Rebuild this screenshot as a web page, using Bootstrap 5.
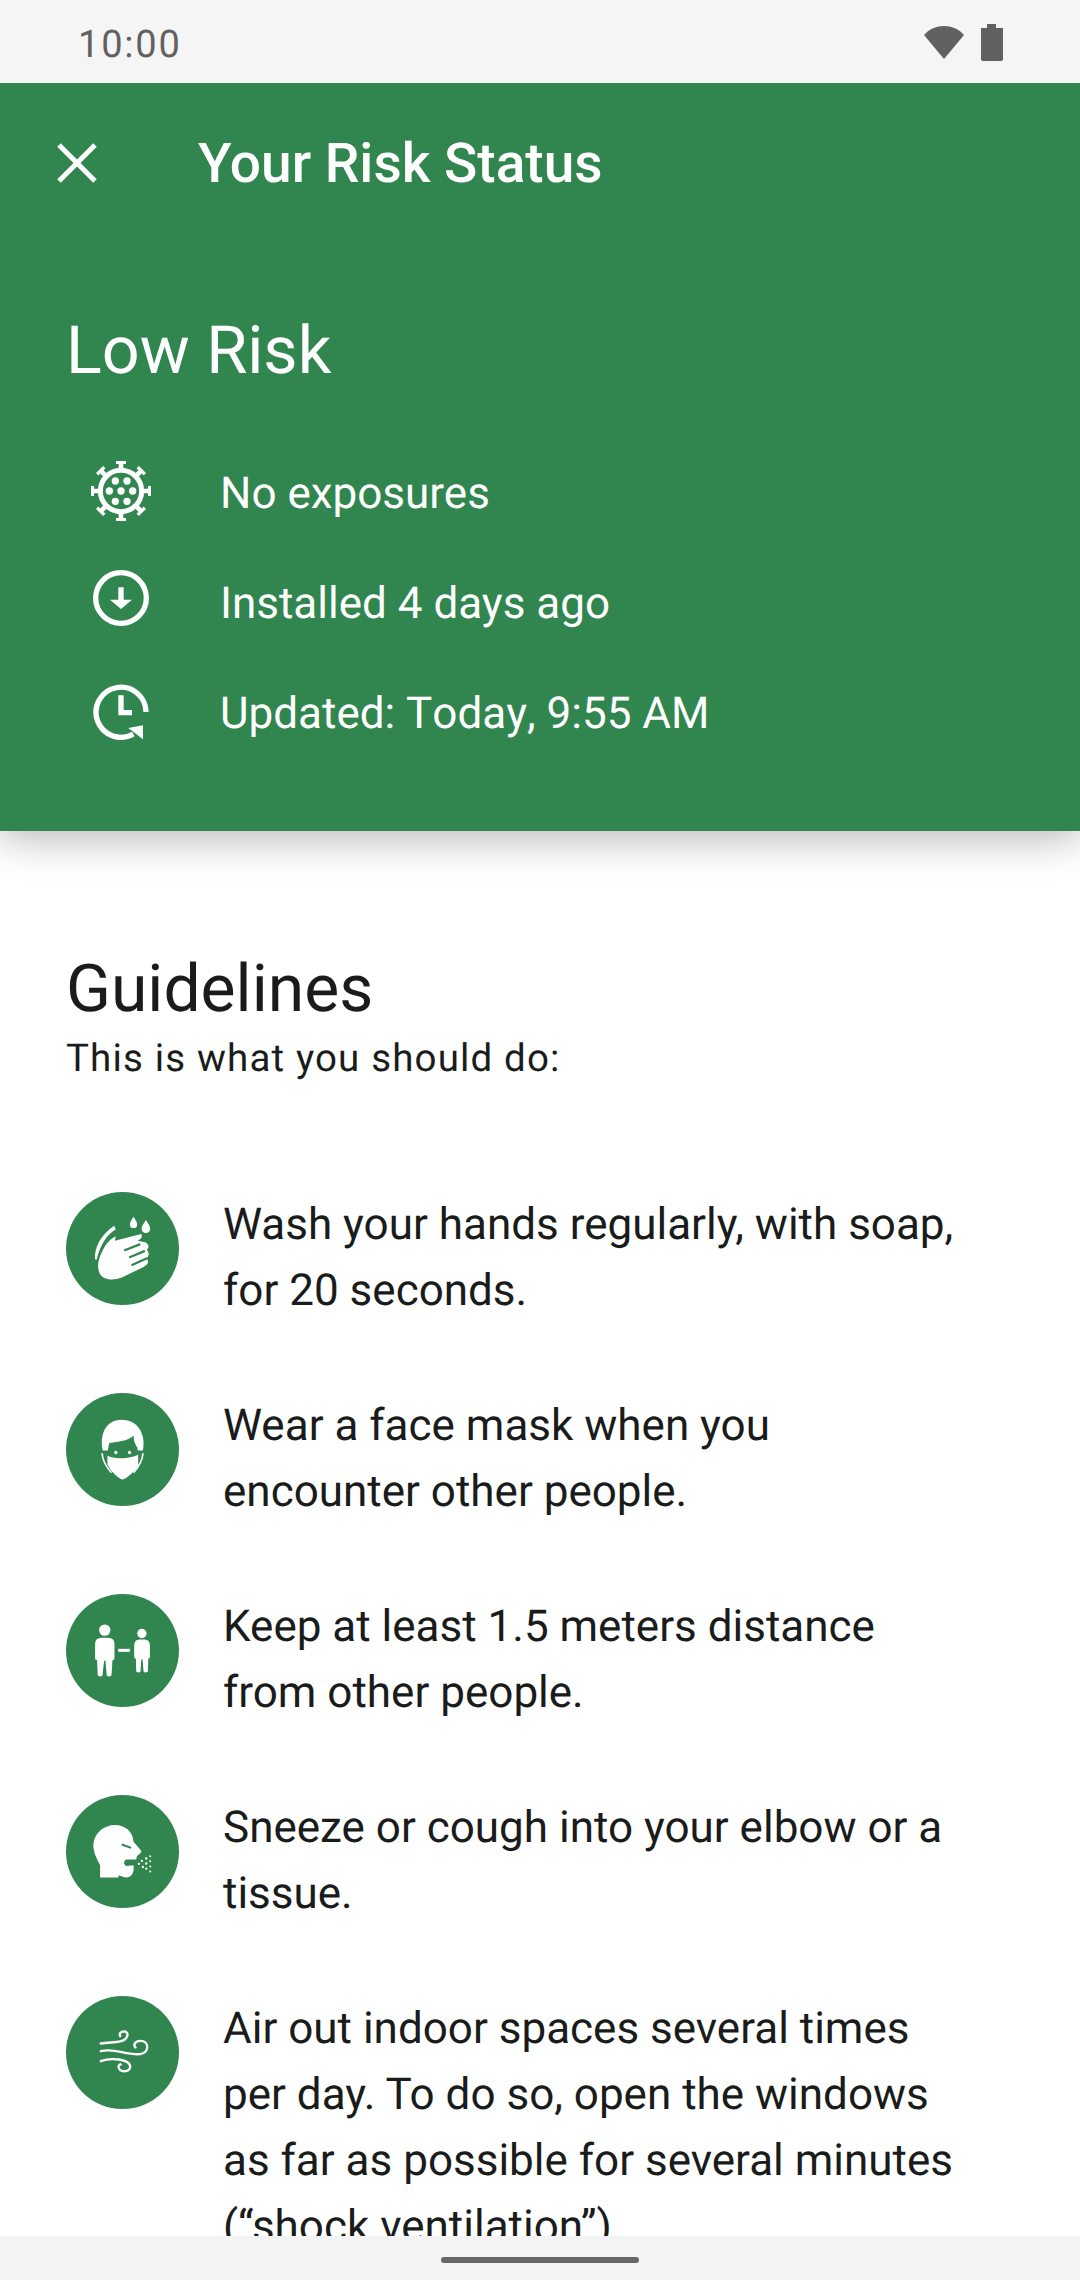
<!DOCTYPE html>
<html lang="en">
<head>
  <meta charset="UTF-8" />
  <meta name="viewport" content="width=device-width, initial-scale=1.0"/>
  <title>Your Risk Status</title>
  <link href="https://cdn.jsdelivr.net/npm/bootstrap@5.3.0/dist/css/bootstrap.min.css" rel="stylesheet" />
  <style>
    html, body { height: 2280px; }
    body {
      font-family: Roboto, "Liberation Sans", sans-serif;
      color: #191c1a;
      background: #fff;
      overflow: hidden;
      text-rendering: geometricPrecision;
    }
    .app-frame { width: 1080px; height: 2280px; }

    .status-strip { height: 83px; background: #f5f5f5; color: #616161; padding: 0 77px 0 78px; flex: none; position: relative; z-index: 3; }
    .status-time { font-size: 38px; line-height: 1; letter-spacing: 1.8px; padding-top: 7px; }
    .status-icons { margin-top: 2px; }

    .risk-panel {
      height: 748px; flex: none; background: #31854f; color: #fff;
      box-shadow: 0 6px 40px rgba(0, 0, 0, .3);
      position: relative; z-index: 2;
    }
    .risk-bar { height: 162px; padding-left: 57px; }
    .risk-close { width: 40px; height: 40px; margin-top: -2px; }
    .risk-title { font-size: 55px; font-weight: 500; line-height: 1; margin: 0 0 0 101px; }
    .risk-level { font-size: 66.5px; line-height: 80px; font-weight: 400; margin: 66px 0 47px 66px; }
    .risk-row { height: 110px; padding-left: 91px; font-size: 44px; }
    .risk-row svg { width: 60px; height: 60px; margin-right: 69px; flex: none; }
    .risk-row svg.lift-sm { margin-bottom: 4px; }
    .risk-row svg.lift-md { margin-bottom: 10px; }
    .risk-row svg.lift-xs { margin-bottom: 2px; }
    .risk-row .no-kern { font-kerning: none; }

    .guide-pane { padding: 0 67px 0 66px; min-height: 0; overflow: hidden; }
    .guide-head { font-size: 66px; font-weight: 400; line-height: 80px; margin: 119px 0 0; }
    .guide-sub { font-size: 38.5px; line-height: 50px; letter-spacing: 1.15px; margin: 4px 0 0; }
    .guide-list { margin-top: 108px; }
    .guide-item { margin-bottom: 70px; }
    .guide-disc { width: 113px; height: 113px; flex: none; margin: 0 44px 0 0; }
    .guide-disc svg { width: 113px; height: 113px; display: block; }
    .guide-text { font-size: 44px; line-height: 66px; margin: -1px 0 0; width: 740px; }

    .gesture-strip { height: 44px; background: #f3f3f3; flex: none; position: relative; z-index: 2; }
    .gesture-pill { width: 198px; height: 6px; border-radius: 3px; background: #666; margin-top: 21px; }
  </style>
</head>
<body>
  <div class="app-frame d-flex flex-column">

    <!-- status bar -->
    <div class="status-strip d-flex align-items-center justify-content-between">
      <span class="status-time">10:00</span>
      <svg class="status-icons" width="80" height="38" viewBox="0 0 80 38" fill="#616161">
        <path d="M1 11 C11 -1 31 -1 41 11 L21 35 Z"/>
        <path d="M58 4 H64 V0 H73 V4 H80 V35 Q80 37 78 37 H60 Q58 37 58 35 Z"/>
      </svg>
    </div>

    <!-- green panel -->
    <div class="risk-panel">
      <div class="risk-bar d-flex align-items-center">
        <svg class="risk-close" viewBox="0 0 40 40" stroke="#fff" stroke-width="5" fill="none"><path d="M2 2 L38 38 M38 2 L2 38"/></svg>
        <h1 class="risk-title">Your Risk Status</h1>
      </div>
      <h2 class="risk-level">Low Risk</h2>

      <div class="risk-row d-flex align-items-center">
        <svg class="lift-sm" viewBox="93 59 180 180" fill="#fff">
          <circle cx="183" cy="149" r="62" fill="none" stroke="#fff" stroke-width="15"/>
          <g id="spike"><path d="M176 80 V68 H168 V58 H198 V68 H190 V80 Z"/></g>
          <use href="#spike" transform="rotate(45 183 149)"/>
          <use href="#spike" transform="rotate(90 183 149)"/>
          <use href="#spike" transform="rotate(135 183 149)"/>
          <use href="#spike" transform="rotate(180 183 149)"/>
          <use href="#spike" transform="rotate(225 183 149)"/>
          <use href="#spike" transform="rotate(270 183 149)"/>
          <use href="#spike" transform="rotate(315 183 149)"/>
          <circle cx="183" cy="149" r="11"/><circle cx="148" cy="149" r="11"/><circle cx="218" cy="149" r="11"/>
          <circle cx="166" cy="119" r="11"/><circle cx="201" cy="119" r="11"/>
          <circle cx="166" cy="180" r="11"/><circle cx="201" cy="180" r="11"/>
        </svg>
        <span>No exposures</span>
      </div>
      <div class="risk-row d-flex align-items-center">
        <svg class="lift-md" viewBox="93 382 180 180" fill="#fff">
          <circle cx="183" cy="472" r="76" fill="none" stroke="#fff" stroke-width="16"/>
          <path d="M175 440 H191 V477 H216 L183 505 L150 477 H175 Z"/>
        </svg>
        <span>Installed 4 days ago</span>
      </div>
      <div class="risk-row d-flex align-items-center">
        <svg class="lift-xs" viewBox="93 720 180 180" fill="#fff">
          <path d="M258 810 A75 75 0 1 0 220 876" fill="none" stroke="#fff" stroke-width="16"/>
          <path d="M175 760 H191 V804 H216 V820 H175 Z"/>
          <path d="M249 850 V892 L205 858 Z"/>
        </svg>
        <span class="no-kern">Updated: Today, 9:55 AM</span>
      </div>
    </div>

    <!-- guidelines -->
    <div class="guide-pane flex-grow-1">
      <h2 class="guide-head">Guidelines</h2>
      <p class="guide-sub">This is what you should do:</p>

      <div class="guide-list">
        <div class="guide-item d-flex align-items-start">
          <div class="guide-disc">
            <svg viewBox="48 66 338 338">
              <circle cx="217" cy="235" r="169" fill="#31854f"/>
              <path fill="#fff" d="M150 312 C138 290 145 265 158 240 C167 222 178 207 197 198 L194 212 L273 192 C278 200 272 208 262 212 L285 216 C297 222 297 232 290 238 L295 248 C296 258 292 262 288 264 L293 272 C295 280 290 284 280 290 L215 322 C190 332 162 330 150 312 Z"/>
              <path fill="#fff" d="M135 268 C132 235 150 195 192 167 L197 178 C170 192 150 225 140 268 Z"/>
              <path stroke="#31854f" stroke-width="7" fill="none" d="M222 241 L270 222 M237 262 L284 242 M244 285 L290 264"/>
              <path fill="#fff" d="M250 140 C256 150 261 156 261 163 A11 11 0 0 1 239 163 C239 156 244 150 250 140 Z M287 150 C294 162 300 168 300 176 A13 13 0 0 1 274 176 C274 168 280 162 287 150 Z"/>
            </svg>
          </div>
          <p class="guide-text">Wash your hands regularly, with soap, for 20 seconds.</p>
        </div>

        <div class="guide-item d-flex align-items-start">
          <div class="guide-disc">
            <svg viewBox="48 68 338 338">
              <circle cx="217" cy="237" r="169" fill="#31854f"/>
              <path fill="#fff" d="M158 240 C148 195 165 148 215 148 C262 148 288 190 278 240 L262 240 L262 232 C258 225 250 215 250 195 C235 212 195 215 177 218 L173 240 Z"/>
              <circle cx="197" cy="246" r="5" fill="#fff"/><circle cx="238" cy="246" r="5" fill="#fff"/>
              <path fill="#fff" d="M172 256 C190 266 240 266 264 252 L264 285 C250 305 230 325 217 327 C205 325 180 300 172 282 Z"/>
              <path fill="none" stroke="#fff" stroke-width="5" d="M156 248 C156 265 168 290 184 306 M278 248 C278 265 266 290 250 306"/>
            </svg>
          </div>
          <p class="guide-text">Wear a face mask when you encounter other people.</p>
        </div>

        <div class="guide-item d-flex align-items-start">
          <div class="guide-disc">
            <svg viewBox="48 72 338 338">
              <circle cx="217" cy="241" r="169" fill="#31854f"/>
              <g fill="#fff">
                <circle cx="164" cy="180" r="17"/>
                <path d="M135 222 Q135 203 155 203 H173 Q193 203 193 222 V264 Q193 270 187 270 L184 316 Q177 322 170 316 L166 272 H162 L157 316 Q150 322 143 316 L141 270 Q135 270 135 264 Z"/>
                <circle cx="275" cy="190" r="14"/>
                <path d="M252 226 Q252 208 268 208 H283 Q299 208 299 226 V260 Q299 266 294 266 L293 304 Q286 310 280 304 L277 268 H273 L271 304 Q265 310 258 304 L257 266 Q252 266 252 260 Z"/>
                <rect x="204" y="236" width="35" height="9"/>
              </g>
            </svg>
          </div>
          <p class="guide-text">Keep at least 1.5 meters distance from other people.</p>
        </div>

        <div class="guide-item d-flex align-items-start">
          <div class="guide-disc">
            <svg viewBox="48 75 338 338">
              <circle cx="217" cy="244" r="169" fill="#31854f"/>
              <path fill="#fff" d="M150 322 L150 285 C140 265 128 245 130 220 C135 185 165 165 195 165 C225 165 248 185 250 215 L273 242 C275 250 262 255 260 258 L258 268 L228 268 C220 272 220 284 228 287 L250 285 C252 300 250 322 225 322 L205 315 L205 322 Z"/>
              <path stroke="#31854f" stroke-width="6" d="M215 223 L243 233"/>
              <g fill="#fff">
                <circle cx="300" cy="258" r="3"/><circle cx="288" cy="265" r="3.5"/><circle cx="275" cy="272" r="3.5"/>
                <circle cx="300" cy="273" r="3"/><circle cx="288" cy="280" r="3.5"/><circle cx="266" cy="281" r="3.5"/>
                <circle cx="278" cy="290" r="3.5"/><circle cx="300" cy="289" r="3"/><circle cx="288" cy="295" r="3.5"/>
                <circle cx="300" cy="304" r="3"/>
              </g>
            </svg>
          </div>
          <p class="guide-text">Sneeze or cough into your elbow or a tissue.</p>
        </div>

        <div class="guide-item d-flex align-items-start">
          <div class="guide-disc">
            <svg viewBox="48 78 338 338">
              <circle cx="217" cy="247" r="169" fill="#31854f"/>
              <g fill="none" stroke="#fff" stroke-width="7" stroke-linecap="round">
                <path d="M152 220 C175 216 195 218 210 214 C235 208 238 185 222 184 C210 184 207 192 210 198"/>
                <path d="M152 243 C195 232 225 256 270 252 C298 248 298 212 270 212 C255 212 248 224 256 232"/>
                <path d="M152 273 C180 262 240 265 240 290 C238 307 208 308 205 290 C205 285 208 282 212 283"/>
              </g>
            </svg>
          </div>
          <p class="guide-text">Air out indoor spaces several times per day. To do so, open the windows as far as possible for several minutes (“shock ventilation”).</p>
        </div>
      </div>
    </div>

    <!-- gesture bar -->
    <div class="gesture-strip d-flex justify-content-center">
      <div class="gesture-pill"></div>
    </div>
  </div>
  <script src="https://cdn.jsdelivr.net/npm/bootstrap@5.3.0/dist/js/bootstrap.bundle.min.js"></script>
</body>
</html>
